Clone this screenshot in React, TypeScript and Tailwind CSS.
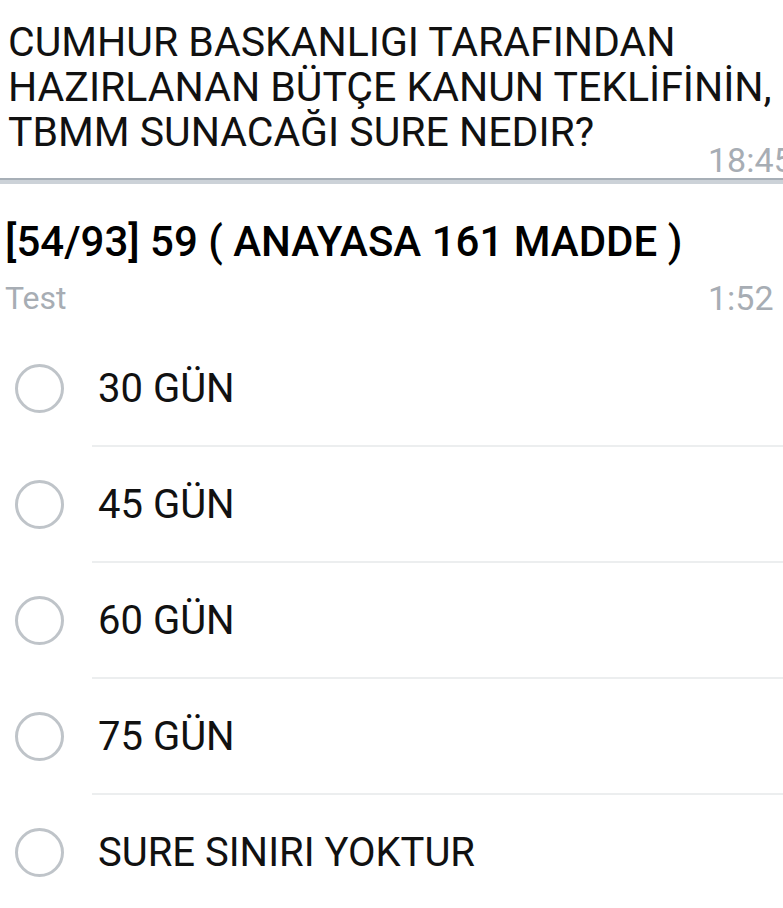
import React from "react"

const options = ["30 GÜN", "45 GÜN", "60 GÜN", "75 GÜN", "SURE SINIRI YOKTUR"]

export default function App() {
  return (
    <div className="w-[783px] h-[908px] overflow-hidden bg-white font-['Roboto',sans-serif] text-[#111]">
      {/* previous message */}
      <div className="flex items-end pt-[20px] pl-2">
        <div className="w-[700px] shrink-0 whitespace-nowrap pb-[23px] text-[41px] leading-[45px]">
          CUMHUR BASKANLIGI TARAFINDAN
          <br />
          HAZIRLANAN BÜTÇE KANUN TEKLİFİNİN,
          <br />
          TBMM SUNACAĞI SURE NEDIR?
        </div>
        <span className="whitespace-nowrap text-[34px] leading-[36px] text-[#a7adb4]">18:45</span>
      </div>

      <div className="h-[6px] border-t-2 border-[#a7afb7] bg-[#ccd2d8]" />

      {/* poll */}
      <div className="pt-[35px]">
        <div className="whitespace-nowrap pl-[5px] text-[42px] font-medium leading-[45px] text-black">
          [54/93] 59 ( ANAYASA 161 MADDE )
        </div>
        <div className="mt-[16px] flex whitespace-nowrap text-[32px] leading-[36px] text-[#a7adb4]">
          <span className="w-[708px] shrink-0 pl-[5px]">Test</span>
          <span className="text-[34px]">1:52</span>
        </div>

        <div className="mt-[15px]">
          {options.map((o, i) => (
            <div key={o}>
              <div className="flex h-[114px] items-center">
                <div className="ml-[15px] h-[49px] w-[49px] shrink-0 rounded-full border-[3px] border-[#bfc4c9]" />
                <span className="ml-[34px] whitespace-nowrap text-[40px] leading-[45px] text-[#111]">{o}</span>
              </div>
              {i < options.length - 1 && <div className="ml-[92px] h-[2px] bg-[#eceeef]" />}
            </div>
          ))}
        </div>
      </div>
    </div>
  )
}
